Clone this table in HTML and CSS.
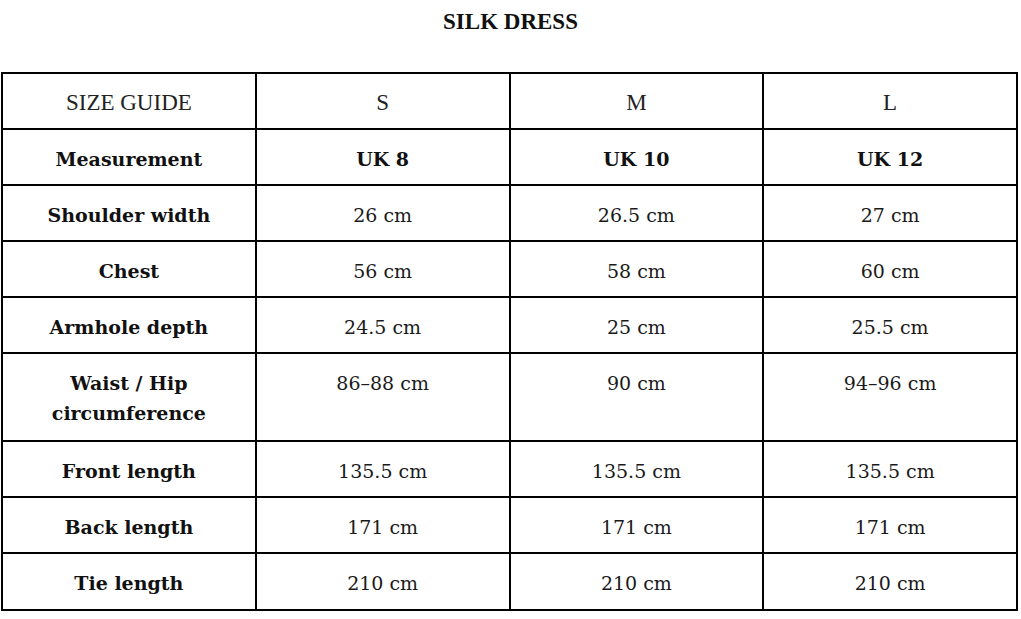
FILE: index.html
```html
<!DOCTYPE html>
<html lang="en">
<head>
<meta charset="utf-8">
<title>Silk Dress – Size Guide</title>
<link rel="stylesheet" href="styles.css">
</head>
<body>
<h1 class="title">SILK DRESS</h1>
<table class="size-table">
  <colgroup>
    <col class="col"><col class="col"><col class="col"><col class="col">
  </colgroup>
  <thead>
    <tr class="head-row">
      <th>SIZE GUIDE</th>
      <th>S</th>
      <th>M</th>
      <th>L</th>
    </tr>
  </thead>
  <tbody>
    <tr class="uk-row">
      <th>Measurement</th>
      <td>UK 8</td>
      <td>UK 10</td>
      <td>UK 12</td>
    </tr>
    <tr>
      <th>Shoulder width</th>
      <td>26 cm</td>
      <td>26.5 cm</td>
      <td>27 cm</td>
    </tr>
    <tr>
      <th>Chest</th>
      <td>56 cm</td>
      <td>58 cm</td>
      <td>60 cm</td>
    </tr>
    <tr>
      <th>Armhole depth</th>
      <td>24.5 cm</td>
      <td>25 cm</td>
      <td>25.5 cm</td>
    </tr>
    <tr class="tall-row">
      <th>Waist / Hip<br>circumference</th>
      <td>86–88 cm</td>
      <td>90 cm</td>
      <td>94–96 cm</td>
    </tr>
    <tr>
      <th>Front length</th>
      <td>135.5 cm</td>
      <td>135.5 cm</td>
      <td>135.5 cm</td>
    </tr>
    <tr>
      <th>Back length</th>
      <td>171 cm</td>
      <td>171 cm</td>
      <td>171 cm</td>
    </tr>
    <tr class="last-row">
      <th>Tie length</th>
      <td>210 cm</td>
      <td>210 cm</td>
      <td>210 cm</td>
    </tr>
  </tbody>
</table>
</body>
</html>
```

FILE: styles.css
```css
html, body {
  margin: 0;
  padding: 0;
  background: #ffffff;
  color: #111111;
}

body {
  font-family: "DejaVu Serif", "Liberation Serif", serif;
}

.title {
  margin: 0 0 28px 0;
  font-family: "Liberation Serif", "Times New Roman", serif;
  font-weight: 700;
  font-size: 23px;
  line-height: 44px;
  text-align: center;
  color: #111111;
}

.size-table {
  margin-left: 1px;
  width: 1017px;
  table-layout: fixed;
  border-collapse: separate;
  border-spacing: 0;
  border-top: 2px solid #000000;
  border-left: 2px solid #000000;
}

.col {
  width: 25%;
}

.size-table th,
.size-table td {
  border-right: 2px solid #000000;
  border-bottom: 2px solid #000000;
  padding: 14px 10px 10px 10px;
  line-height: 30px;
  text-align: center;
  vertical-align: top;
  font-size: 19px;
}

.size-table tbody th {
  font-weight: 700;
}

.size-table td {
  font-weight: 400;
  color: #1a1a1a;
}

.head-row th {
  font-family: "Liberation Serif", "Times New Roman", serif;
  font-weight: 400;
  font-size: 23px;
  color: #222222;
}

.uk-row td {
  font-weight: 700;
  color: #111111;
}

.tall-row th,
.tall-row td {
  padding-bottom: 12px;
}

.last-row th,
.last-row td {
  padding-bottom: 11px;
}
```
